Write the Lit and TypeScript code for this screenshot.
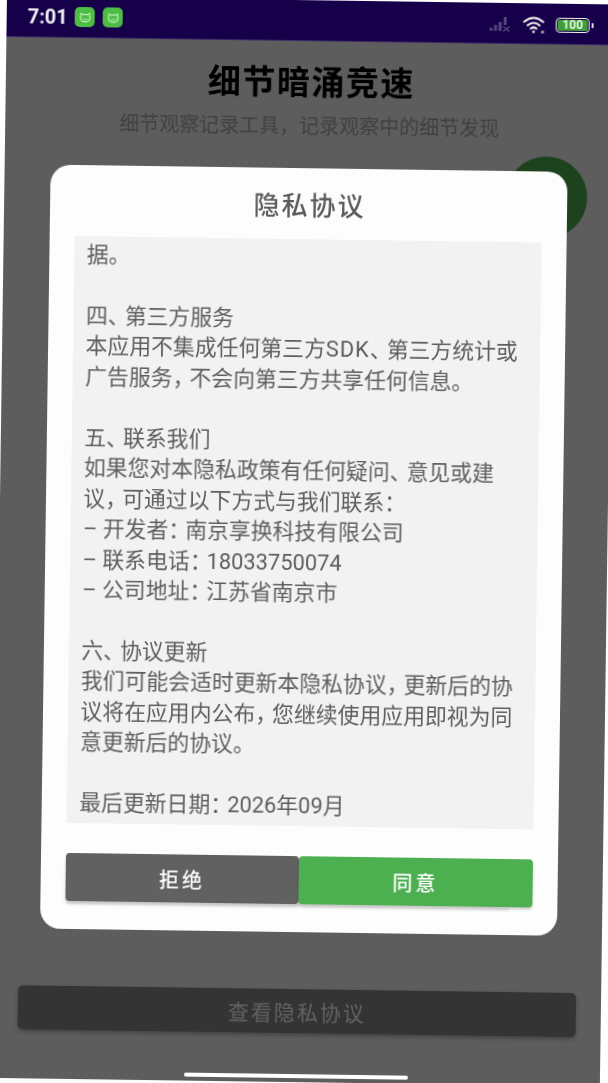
import { LitElement, html, css, svg } from "lit";
import { customElement } from "lit/decorators.js";

const LINES = [
  "据。",
  "",
  "四、第三方服务",
  "本应用不集成任何第三方SDK、第三方统计或",
  "广告服务，不会向第三方共享任何信息。",
  "",
  "五、联系我们",
  "如果您对本隐私政策有任何疑问、意见或建",
  "议，可通过以下方式与我们联系：",
  "– 开发者：南京享换科技有限公司",
  "– 联系电话：18033750074",
  "– 公司地址：江苏省南京市",
  "",
  "六、协议更新",
  "我们可能会适时更新本隐私协议，更新后的协",
  "议将在应用内公布，您继续使用应用即视为同",
  "意更新后的协议。",
  "",
  "最后更新日期：2026年09月",
];

const cat = svg`<svg class="cat" viewBox="0 0 12 12" fill="none" stroke="#c9f5c0" stroke-width="1">
  <path d="M2 2.2 L4 3.4 Q6 2.9 8 3.4 L10 2.2 L10.3 6.5 Q10 10 6 10 Q2 10 1.7 6.5 Z"/>
  <path d="M4 7.6 H8" stroke-width="0.8"/>
</svg>`;

const lineParts = (l: string) =>
  l.split(/([、，：]|SDK)/).map((p) =>
    p === "SDK"
      ? html`<span class="latin">${p}</span>`
      : /^[、，：]$/.test(p)
        ? html`<span class="punct">${p}</span>`
        : p,
  );

@customElement("app-root")
export class AppRoot extends LitElement {
  static styles = css`
    :host {
      display: block;
      width: 608px;
      height: 1083px;
      overflow: hidden;
      background: #fff;
      font-family: Roboto, "Noto Sans CJK SC", sans-serif;
    }
    .screen {
      width: 608px;
      height: 1082px;
      display: flex;
      flex-direction: column;
      background: #f4f4f4;
      transform-origin: 0 0;
      transform: translate(7px, -4px) rotate(0.8deg);
      filter: blur(0.45px);
    }
    .status {
      flex: none;
      height: 41px;
      background: #17004a;
      display: flex;
      align-items: center;
      padding: 0 21px 0 21px;
      box-sizing: border-box;
      border-bottom: 1px solid #3a2a66;
    }
    .time {
      color: #eeeef4;
      font-size: 20px;
      font-weight: 700;
      margin-right: 9px;
      width: 38px;
    }
    .app {
      width: 20px;
      height: 20px;
      border-radius: 5px;
      background: #4dbd45;
      margin-right: 8px;
      display: flex;
      align-items: center;
      justify-content: center;
    }
    .cat {
      width: 13px;
      height: 13px;
    }
    .right {
      margin-left: auto;
      display: flex;
      align-items: center;
      gap: 9px;
      padding-top: 2px;
    }
    .batt {
      display: flex;
      align-items: center;
      gap: 2px;
    }
    .batt-body {
      width: 34px;
      height: 15px;
      box-sizing: border-box;
      border: 1.5px solid #f2f2f2;
      border-radius: 4px;
      padding: 1px;
      display: flex;
    }
    .batt-fill {
      flex: 1;
      background: #3f9e3c;
      border-radius: 1.5px;
      color: #e6f7dc;
      font-size: 12px;
      line-height: 10px;
      font-weight: 700;
      text-align: center;
    }
    .batt-tip {
      width: 2px;
      height: 5px;
      background: #ddd;
      border-radius: 0 1px 1px 0;
    }
    .page {
      flex: 1;
      position: relative;
      display: flex;
      flex-direction: column;
      align-items: center;
      padding-top: 20px;
      min-height: 0;
    }
    .title {
      font-size: 33px;
      line-height: 44px;
      font-weight: 700;
      letter-spacing: 1.5px;
      color: #000;
      padding-left: 3px;
    }
    .sub {
      margin-top: 7px;
      font-size: 20px;
      line-height: 28px;
      color: #a8a8a8;
    }
    .fab {
      align-self: flex-end;
      margin: 13px 25px 0 0;
      width: 82px;
      height: 82px;
      border-radius: 50%;
      background: #4caf50;
    }
    .view {
      margin-top: auto;
      width: 558px;
      height: 44px;
      border-radius: 5px;
      background: #888;
      color: #fff;
      font-size: 21px;
      letter-spacing: 2px;
      display: flex;
      align-items: center;
      justify-content: center;
      box-shadow: 0 2px 4px rgba(0, 0, 0, 0.3);
    }
    .home {
      position: relative;
      z-index: 2;
      margin: 41px 0 4px;
      width: 224px;
      height: 4px;
      border-radius: 2px;
      background: #fff;
    }
    .scrim {
      position: absolute;
      inset: 0;
      background: rgba(0, 0, 0, 0.62);
      display: flex;
      justify-content: center;
      align-items: flex-start;
    }
    .dialog {
      margin-top: 127px;
      width: 517px;
      height: 764px;
      box-sizing: border-box;
      background: #fdfdfd;
      border-radius: 20px;
      padding: 0 25px 28px;
      display: flex;
      flex-direction: column;
    }
    .dtitle {
      height: 71px;
      flex: none;
      box-sizing: border-box;
      padding: 6px 0 0 3px;
      text-align: center;
      font-size: 26px;
      line-height: 65px;
      font-weight: 500;
      letter-spacing: 2px;
      color: #5c5c5c;
    }
    .box {
      height: 587px;
      flex: none;
      box-sizing: border-box;
      background: #f2f2f2;
      padding: 4px 10px 0 13px;
      overflow: hidden;
      font-size: 21.85px;
      line-height: 30.45px;
      color: #5e5e5e;
    }
    .line {
      min-height: 30.45px;
      white-space: nowrap;
    }
    .punct {
      letter-spacing: -5px;
      margin-right: 0;
    }
    .latin {
      letter-spacing: 1px;
    }
    .actions {
      margin-top: auto;
      display: flex;
      height: 48px;
    }
    .btn {
      flex: 1;
      border-radius: 4px;
      color: #fff;
      font-size: 20px;
      font-weight: 500;
      letter-spacing: 3px;
      display: flex;
      align-items: center;
      justify-content: center;
      box-shadow: 0 2px 3px rgba(0, 0, 0, 0.22);
    }
    .no {
      background: #616161;
    }
    .yes {
      background: #4caf50;
    }
  `;

  render() {
    return html`
      <div class="screen">
        <div class="status">
          <span class="time">7:01</span>
          <span class="app">${cat}</span>
          <span class="app">${cat}</span>
          <div class="right">
            <svg width="24" height="16" viewBox="0 0 24 16" fill="#55447c">
              <rect x="0" y="12" width="3" height="3" />
              <rect x="4.5" y="9" width="3" height="6" />
              <rect x="9" y="6" width="3" height="9" />
              <rect x="14" y="1" width="3" height="8" />
              <path d="M13.5 10.5 L20 15.5 M20 10.5 L13.5 15.5" stroke="#55447c" stroke-width="1.4" />
            </svg>
            <svg width="24" height="19" viewBox="0 0 24 19" fill="none" stroke="#f4f4f4" stroke-width="2" stroke-linecap="round">
              <path d="M1.5 6.5 Q11 -1.5 20.5 6.5" />
              <path d="M5 10 Q11 5 17 10" />
              <path d="M8.2 13.3 Q11 11 13.8 13.3" />
              <circle cx="11" cy="16.5" r="1.3" fill="#f4f4f4" stroke="none" />
              <circle cx="20" cy="16.5" r="1.6" fill="#aaa" stroke="none" />
            </svg>
            <div class="batt">
              <div class="batt-body"><div class="batt-fill">100</div></div>
              <div class="batt-tip"></div>
            </div>
          </div>
        </div>
        <div class="page">
          <div class="title">细节暗涌竞速</div>
          <div class="sub">细节观察记录工具，记录观察中的细节发现</div>
          <div class="fab"></div>
          <div class="view">查看隐私协议</div>
          <div class="home"></div>
          <div class="scrim">
            <div class="dialog">
              <div class="dtitle">隐私协议</div>
              <div class="box">
                ${LINES.map((l) => html`<div class="line">${lineParts(l)}</div>`)}
              </div>
              <div class="actions">
                <div class="btn no">拒绝</div>
                <div class="btn yes">同意</div>
              </div>
            </div>
          </div>
        </div>
      </div>
    `;
  }
}
